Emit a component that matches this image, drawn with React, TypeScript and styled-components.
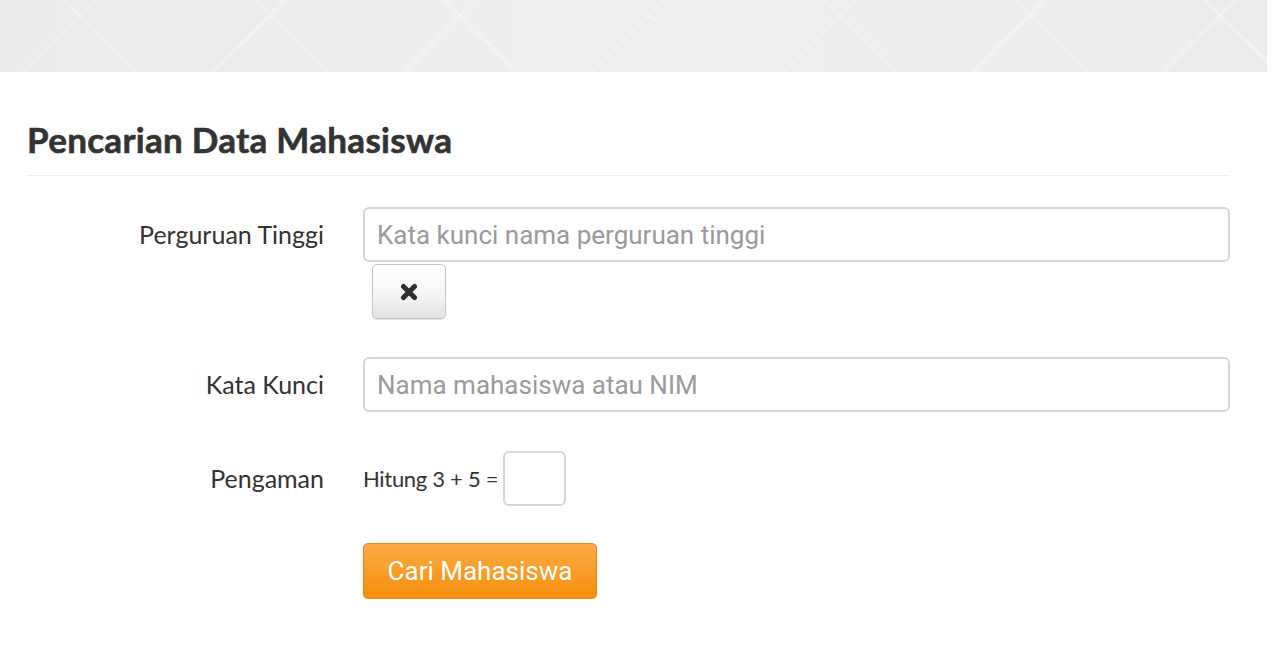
import { createGlobalStyle } from 'styled-components'
import styled from 'styled-components'

const GlobalStyle = createGlobalStyle`
  html, body {
    margin: 0;
    padding: 0;
    background: #fff;
  }
  body {
    font-family: Lato, 'Open Sans', sans-serif;
    color: #333;
  }
`

const crossings = Array.from({ length: 8 }, (_, i) => 80 + i * 190)

const HeaderPattern = () => (
  <PatternSvg width="1267" height="72" viewBox="0 0 1267 72" preserveAspectRatio="none">
    {crossings.map((x) => (
      <g key={x} stroke="#f5f5f5" strokeWidth="2" opacity="0.75">
        <line x1={x - 100} y1={115} x2={x + 20} y2={-5} />
        <line x1={x + 100} y1={115} x2={x - 20} y2={-5} />
      </g>
    ))}
  </PatternSvg>
)

const TimesIcon = () => (
  <svg width="18" height="18" viewBox="0 0 18 18">
    <path
      d="M3.5 3.5 L14.5 14.5 M14.5 3.5 L3.5 14.5"
      stroke="#2e2e2e"
      strokeWidth="5"
      strokeLinecap="round"
    />
  </svg>
)

const App = () => {
  return (
    <>
      <GlobalStyle />
      <Banner>
        <HeaderPattern />
      </Banner>
      <Main>
        <Title>Pencarian Data Mahasiswa</Title>
        <Divider />
        <Form>
          <Row>
            <Label>Perguruan Tinggi</Label>
            <Field>
              <TextInput placeholder="Kata kunci nama perguruan tinggi" />
              <ClearButton type="button">
                <TimesIcon />
              </ClearButton>
            </Field>
          </Row>
          <Row $gap={38}>
            <Label>Kata Kunci</Label>
            <Field>
              <TextInput placeholder="Nama mahasiswa atau NIM" />
            </Field>
          </Row>
          <Row $gap={39}>
            <Label>Pengaman</Label>
            <Captcha>
              <CaptchaText>Hitung 3 + 5 =</CaptchaText>
              <CaptchaInput />
            </Captcha>
          </Row>
          <Row $gap={37}>
            <Label />
            <SubmitButton type="button">Cari Mahasiswa</SubmitButton>
          </Row>
        </Form>
      </Main>
    </>
  )
}

export default App

const Banner = styled.div`
  width: 1267px;
  height: 72px;
  background: linear-gradient(90deg, #ebebeb 0%, #eeeeee 50%, #ececec 100%);
  overflow: hidden;
`

const PatternSvg = styled.svg`
  display: block;
`

const Main = styled.div`
  padding: 0 50px 0 27px;
`

const Title = styled.h1`
  margin: 0;
  padding-top: 44px;
  font-family: Lato, 'Open Sans', sans-serif;
  font-weight: 700;
  font-size: 35px;
  line-height: 46px;
  letter-spacing: 0.3px;
  color: #333;
  -webkit-text-stroke: 0.6px #333;
`

const Divider = styled.div`
  height: 1px;
  background: #eee;
  margin-top: 13px;
  width: 1203px;
`

const Form = styled.div`
  display: flex;
  flex-direction: column;
  padding-top: 31px;
  width: 1203px;
`

const Row = styled.div<{ $gap?: number }>`
  display: flex;
  align-items: flex-start;
  margin-top: ${({ $gap }) => $gap ?? 0}px;
`

const Label = styled.div`
  width: 336px;
  flex-shrink: 0;
  text-align: right;
  padding-right: 39px;
  box-sizing: border-box;
  font-size: 25px;
  line-height: 55px;
  color: #333;
`

const Field = styled.div`
  flex: 1;
  display: flex;
  flex-direction: column;
  align-items: flex-start;
  gap: 2px;
`

const TextInput = styled.input`
  width: 100%;
  height: 55px;
  box-sizing: border-box;
  border: 2px solid #d6d6d6;
  border-radius: 6px;
  padding: 0 12px;
  font-family: Roboto, sans-serif;
  font-size: 26px;
  color: #333;
  outline: none;
  &::placeholder {
    color: #9a9a9a;
  }
`

const ClearButton = styled.button`
  margin-left: 9px;
  width: 74px;
  height: 55px;
  border: 1px solid #c4c4c4;
  border-radius: 5px;
  background: linear-gradient(180deg, #ffffff 0%, #f4f4f4 60%, #e2e2e2 100%);
  box-shadow: 0 1px 1px rgba(0, 0, 0, 0.12);
  display: flex;
  align-items: center;
  justify-content: center;
  padding: 0;
  cursor: pointer;
`

const Captcha = styled.div`
  display: flex;
  align-items: center;
  gap: 5px;
`

const CaptchaText = styled.span`
  font-size: 22px;
  color: #333;
  letter-spacing: -0.3px;
`

const CaptchaInput = styled.input`
  width: 63px;
  height: 55px;
  box-sizing: border-box;
  border: 2px solid #d6d6d6;
  border-radius: 6px;
  outline: none;
`

const SubmitButton = styled.button`
  width: 234px;
  height: 56px;
  border: 1px solid #e38a10;
  border-radius: 5px;
  background: linear-gradient(180deg, #fbab45 0%, #f89a22 60%, #f4900f 100%);
  box-shadow: 0 1px 2px rgba(0, 0, 0, 0.15);
  color: #fff;
  font-family: Roboto, sans-serif;
  font-size: 26px;
  padding: 0;
  cursor: pointer;
`
